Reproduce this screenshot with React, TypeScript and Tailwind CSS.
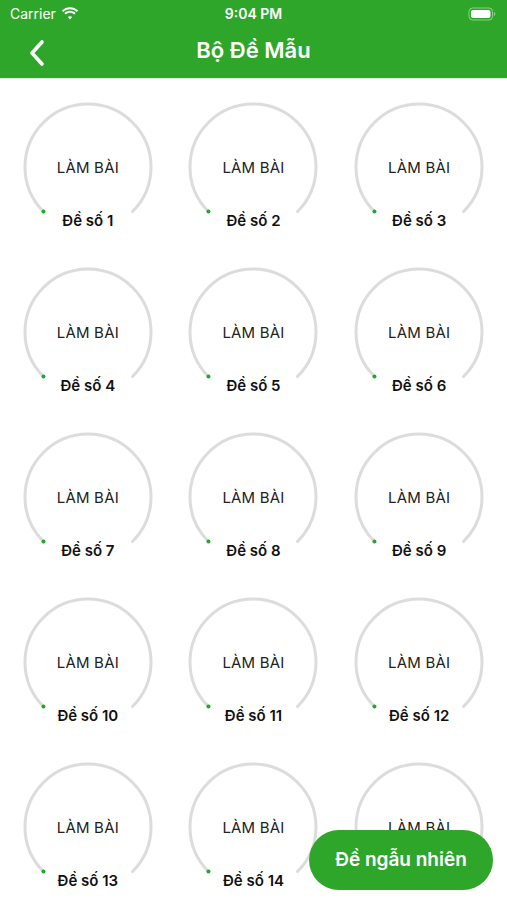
import React from "react";

const GREEN = "bg-[#2ea62a]";

function Wifi() {
  return (
    <svg width="18" height="13" viewBox="0 0 18 13" fill="white">
      <path d="M9 2.2c2.6 0 5 1 6.8 2.7l1.3-1.4C14.9 1.4 12 .2 9 .2S3.1 1.4.9 3.5l1.3 1.4C4 3.2 6.4 2.2 9 2.2z" />
      <path d="M9 5.8c1.6 0 3.1.6 4.3 1.7l1.3-1.4C13.1 4.7 11.1 3.8 9 3.8S4.9 4.7 3.4 6.1l1.3 1.4C5.9 6.4 7.4 5.8 9 5.8z" />
      <path d="M9 9.2c.8 0 1.6.3 2.1.9L9 12.4 6.9 10.1c.5-.6 1.3-.9 2.1-.9z" />
    </svg>
  );
}

function Battery() {
  return (
    <svg width="28" height="14" viewBox="0 0 28 14">
      <rect x="1" y="1" width="23.5" height="12" rx="3.5" fill="none" stroke="rgba(255,255,255,0.45)" strokeWidth="1" />
      <rect x="3" y="3" width="19.5" height="8" rx="2" fill="white" />
      <path d="M26 5v4c.8-.3 1.3-1 1.3-2s-.5-1.7-1.3-2z" fill="rgba(255,255,255,0.45)" />
    </svg>
  );
}

function Cell({ n }: { n: number }) {
  return (
    <div className="flex justify-center">
      <div className="relative w-[132px] h-[132px]">
        <svg width="132" height="132" viewBox="0 0 132 132" className="absolute inset-0">
          <path
            d="M21.45 110.55 A63 63 0 1 1 110.55 110.55"
            fill="none"
            stroke="#dcdcdc"
            strokeWidth="3"
            strokeLinecap="round"
          />
          <circle cx="21.45" cy="110.55" r="2" fill="#1fa82a" />
        </svg>
        <div className="absolute inset-0 flex items-center justify-center pt-[3px] text-[15px] text-[#222] tracking-[0.2px]">
          LÀM BÀI
        </div>
        <div className="absolute left-0 right-0 top-[109px] text-center text-[15px] font-semibold text-[#111]">
          Đề số {n}
        </div>
      </div>
    </div>
  );
}

export default function App() {
  const items = Array.from({ length: 15 }, (_, i) => i + 1);
  return (
    <div
      className="relative w-[507px] h-[900px] overflow-hidden bg-white"
      style={{ fontFamily: "Inter, 'Noto Sans', sans-serif" }}
    >
      <div className={`${GREEN} text-white`}>
        <div className="relative h-[27px] flex items-center px-[10px]">
          <div className="flex items-center gap-[5px] text-[14px]">
            <span>Carrier</span>
            <Wifi />
          </div>
          <div className="absolute left-0 right-0 top-0 h-[27px] flex items-center justify-center text-[14px] font-semibold">
            9:04 PM
          </div>
          <div className="ml-auto mr-[1px] flex items-center">
            <Battery />
          </div>
        </div>
        <div className="relative h-[51px] flex items-center justify-center">
          <div className="absolute left-[27px] top-[12px]">
            <svg width="20" height="28" viewBox="0 0 20 28">
              <path d="M15 3 L5 14 L15 25" fill="none" stroke="white" strokeWidth="3.6" strokeLinecap="round" strokeLinejoin="round" />
            </svg>
          </div>
          <div className="text-[22px] font-semibold -mt-[4px]">Bộ Đề Mẫu</div>
        </div>
      </div>
      <div className="h-[1px] bg-[#dfeedd]" />
      <div className="grid grid-cols-3 px-[5px] pt-[22px] gap-y-[33px]">
        {items.map((n) => (
          <Cell key={n} n={n} />
        ))}
      </div>
      <button className="absolute right-[14px] bottom-[10px] w-[184px] h-[60px] rounded-full bg-[#2ea62a] text-white text-[19px] font-semibold flex items-center justify-center">
        Đề ngẫu nhiên
      </button>
    </div>
  );
}
